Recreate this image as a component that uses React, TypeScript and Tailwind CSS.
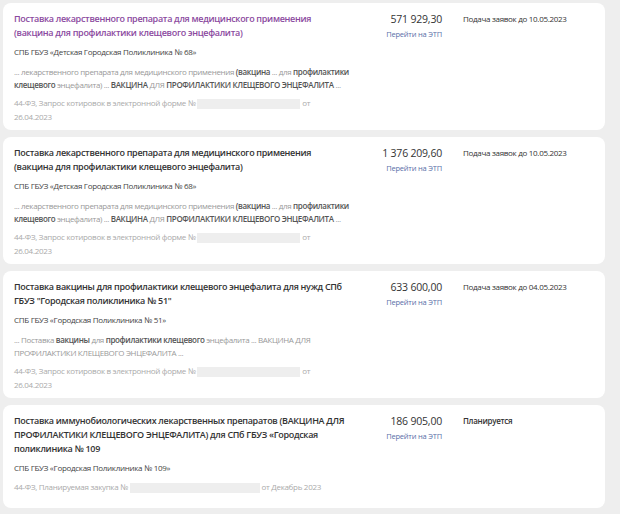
import React from 'react';

interface Tender {
  title: string;
  visited?: boolean;
  org: string;
  snippet?: React.ReactNode;
  footerPrefix: string;
  footerSuffix: string;
  numberWide?: boolean;
  price: string;
  status: string;
  statusBold?: boolean;
}

const B = ({ children }: { children: React.ReactNode }) => (
  <b className="font-semibold text-[#555]">{children}</b>
);

const tenders: Tender[] = [
  {
    title:
      'Поставка лекарственного препарата для медицинского применения (вакцина для профилактики клещевого энцефалита)',
    visited: true,
    org: 'СПБ ГБУЗ «Детская Городская Поликлиника № 68»',
    snippet: (
      <>
        ... лекарственного препарата для медицинского применения <B>(вакцина</B> ... для <B>профилактики</B>{' '}
        <B>клещевого</B> энцефалита) ... <B>ВАКЦИНА</B> ДЛЯ <B>ПРОФИЛАКТИКИ КЛЕЩЕВОГО ЭНЦЕФАЛИТА</B> ...
      </>
    ),
    footerPrefix: '44-ФЗ, Запрос котировок в электронной форме №',
    footerSuffix: 'от 26.04.2023',
    price: '571 929,30',
    status: 'Подача заявок до 10.05.2023',
  },
  {
    title:
      'Поставка лекарственного препарата для медицинского применения (вакцина для профилактики клещевого энцефалита)',
    org: 'СПБ ГБУЗ «Детская Городская Поликлиника № 68»',
    snippet: (
      <>
        ... лекарственного препарата для медицинского применения <B>(вакцина</B> ... для <B>профилактики</B>{' '}
        <B>клещевого</B> энцефалита) ... <B>ВАКЦИНА</B> ДЛЯ <B>ПРОФИЛАКТИКИ КЛЕЩЕВОГО ЭНЦЕФАЛИТА</B> ...
      </>
    ),
    footerPrefix: '44-ФЗ, Запрос котировок в электронной форме №',
    footerSuffix: 'от 26.04.2023',
    price: '1 376 209,60',
    status: 'Подача заявок до 10.05.2023',
  },
  {
    title:
      'Поставка вакцины для профилактики клещевого энцефалита для нужд СПб ГБУЗ "Городская поликлиника № 51"',
    org: 'СПБ ГБУЗ «Городская Поликлиника № 51»',
    snippet: (
      <>
        ... Поставка <B>вакцины</B> для <B>профилактики клещевого</B> энцефалита ... ВАКЦИНА ДЛЯ ПРОФИЛАКТИКИ
        КЛЕЩЕВОГО ЭНЦЕФАЛИТА ...
      </>
    ),
    footerPrefix: '44-ФЗ, Запрос котировок в электронной форме №',
    footerSuffix: 'от 26.04.2023',
    price: '633 600,00',
    status: 'Подача заявок до 04.05.2023',
  },
  {
    title:
      'Поставка иммунобиологических лекарственных препаратов (ВАКЦИНА ДЛЯ ПРОФИЛАКТИКИ КЛЕЩЕВОГО ЭНЦЕФАЛИТА) для СПб ГБУЗ «Городская поликлиника № 109',
    org: 'СПБ ГБУЗ «Городская Поликлиника № 109»',
    footerPrefix: '44-ФЗ, Планируемая закупка №',
    footerSuffix: 'от Декабрь 2023',
    numberWide: true,
    price: '186 905,00',
    status: 'Планируется',
    statusBold: true,
  },
];

function TenderCard({ t }: { t: Tender }) {
  return (
    <div className="flex min-h-[103px] rounded-[8px] bg-white pl-[11px] pt-[9px] pb-[6px]">
      <div className="w-[335px] shrink-0">
        <div
          className={`text-[9px] font-semibold leading-[14px] tracking-[-0.3px] ${
            t.visited ? 'text-[#8b4aa0]' : 'text-[#333333]'
          }`}
        >
          {t.title}
        </div>
        <div className="mt-[5px] text-[8px] leading-[13px] tracking-[-0.3px] text-[#444]">{t.org}</div>
        {t.snippet && (
          <div className="mt-[7px] text-[8px] leading-[13px] tracking-[-0.35px] text-[#999]">{t.snippet}</div>
        )}
        <div
          className={`text-[8px] leading-[14px] tracking-[-0.3px] text-[#aaa] ${
            t.snippet ? 'mt-[5px]' : 'mt-[6px]'
          }`}
        >
          {t.footerPrefix}{' '}
          <span
            className={`inline-block h-[10px] bg-[#eeeeee] align-middle ${
              t.numberWide ? 'w-[130px]' : 'w-[103px]'
            }`}
          />{' '}
          {t.footerSuffix}
        </div>
      </div>
      <div className="w-[93px] shrink-0 text-right">
        <div className="text-[10.5px] leading-[15px] tracking-[-0.2px] text-[#333]">{t.price}</div>
        <div className="mt-[1px] text-[7.5px] leading-[12px] tracking-[-0.2px] text-[#5a6fa8]">Перейти на ЭТП</div>
      </div>
      <div
        className={`ml-[21px] pt-[1px] text-[8px] leading-[12px] tracking-[-0.3px] text-[#333] ${
          t.statusBold ? 'font-semibold' : ''
        }`}
      >
        {t.status}
      </div>
    </div>
  );
}

export default function App() {
  return (
    <div
      className="min-h-[514px] w-[620px] bg-[#eeeeee] pl-[3px] pr-[15px] pt-[3px]"
      style={{ fontFamily: '"Open Sans", "Noto Sans", sans-serif' }}
    >
      <div className="flex flex-col gap-[7px]">
        {tenders.map((t, i) => (
          <TenderCard key={i} t={t} />
        ))}
      </div>
    </div>
  );
}
